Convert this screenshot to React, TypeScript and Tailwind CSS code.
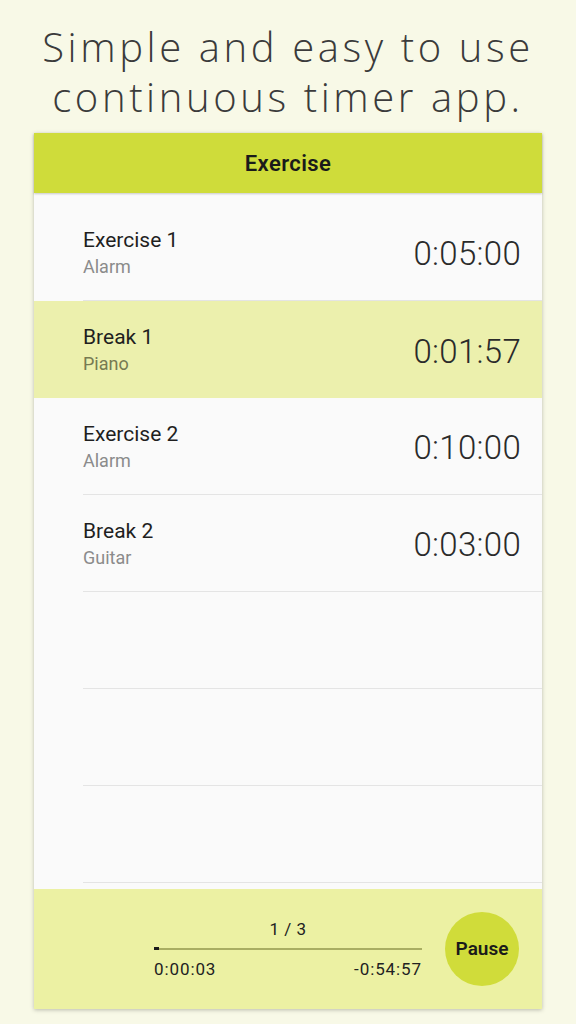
const ROWS = [
  { title: 'Exercise 1', sound: 'Alarm', time: '0:05:00', active: false },
  { title: 'Break 1', sound: 'Piano', time: '0:01:57', active: true },
  { title: 'Exercise 2', sound: 'Alarm', time: '0:10:00', active: false },
  { title: 'Break 2', sound: 'Guitar', time: '0:03:00', active: false },
  null,
  null,
  null,
];

function Row({ row }: { row: (typeof ROWS)[number] }) {
  if (!row) {
    return (
      <div className="h-[97px] flex">
        <div className="w-[49px]" />
        <div className="flex-1 border-b border-[#e4e4e4]" />
      </div>
    );
  }
  return (
    <div className={`h-[97px] flex ${row.active ? 'bg-[#ecf0ad]' : ''}`}>
      <div className="w-[49px]" />
      <div className={`flex-1 flex items-center justify-between pr-[21px] ${row.active ? '' : 'border-b border-[#e4e4e4]'}`}>
        <div className="flex flex-col">
          <span className="text-[21px] leading-[29px] text-[#1f1f1f]">{row.title}</span>
          <span className={`text-[18px] leading-[24px] ${row.active ? 'text-[#767a52]' : 'text-[#8b8b8b]'}`}>{row.sound}</span>
        </div>
        <span className="mt-[4px] text-[33px] tracking-[0.3px] font-light text-[#2a2a2a] font-['Roboto',sans-serif]">{row.time}</span>
      </div>
    </div>
  );
}

export default function App() {
  return (
    <div className="w-[576px] h-[1024px] bg-[#f8f9e7] flex flex-col font-['Roboto',sans-serif] overflow-hidden">
      {/* Headline */}
      <div className="h-[133px] flex flex-col items-center pt-[22px] text-[40px] leading-[50px] tracking-[3.6px] text-[#3b3b3b] font-light font-['Open_Sans',sans-serif]">
        <p>Simple and easy to use</p>
        <p>continuous timer app.</p>
      </div>

      {/* Phone panel */}
      <div className="ml-[34px] w-[508px] h-[876px] flex flex-col bg-[#fafafa] shadow-[0_1px_4px_rgba(0,0,0,0.25)]">
        <div className="h-[60px] bg-[#cfdc3a] flex items-center justify-center shadow-[0_1px_2px_rgba(0,0,0,0.2)] z-10">
          <span className="text-[22px] tracking-[0.4px] font-semibold text-[#1a1a1a]">Exercise</span>
        </div>

        <div className="flex-1 pt-[11px] overflow-hidden">
          {ROWS.map((row, i) => (
            <Row key={i} row={row} />
          ))}
        </div>

        {/* Player */}
        <div className="h-[120px] bg-[#ecf1a3] flex items-center justify-end pr-[23px] gap-[23px]">
          <div className="w-[268px] flex flex-col">
            <span className="text-center text-[17px] leading-[20px] text-[#222] tracking-[0.5px]">1 / 3</span>
            <div className="relative mt-[8px] h-[3px] flex items-center">
              <div className="w-full h-[2px] bg-[#a9ae62]" />
              <div className="absolute left-0 w-[5px] h-[3px] bg-[#1a1a1a]" />
            </div>
            <div className="mt-[9px] flex justify-between text-[17px] leading-[20px] tracking-[0.9px] text-[#222]">
              <span>0:00:03</span>
              <span>-0:54:57</span>
            </div>
          </div>
          <button className="w-[74px] h-[74px] rounded-full bg-[#d0dc3a] flex items-center justify-center text-[19px] font-semibold text-[#1a1a1a]">
            Pause
          </button>
        </div>
      </div>
    </div>
  );
}
